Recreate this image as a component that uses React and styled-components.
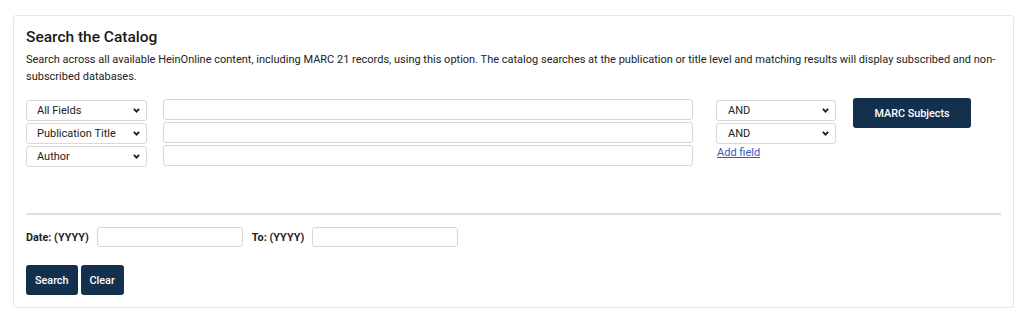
import React from "react";
import styled, { createGlobalStyle } from "styled-components";

const Global = createGlobalStyle`
  html, body { margin: 0; padding: 0; background: #fff; }
  body { font-family: Roboto, "Noto Sans", Arial, sans-serif; color: #222; }
  * { box-sizing: border-box; }
`;

const Page = styled.div`
  padding: 15px 10px 0 13px;
`;

const Card = styled.section`
  width: 1001px;
  border: 1px solid #e6e6e6;
  border-radius: 3px;
  padding: 11px 12px 12px 12px;
  background: #fff;
`;

const Title = styled.h2`
  margin: 0;
  font-size: 15.5px;
  line-height: 20px;
  font-weight: 500;
  color: #1a1a1a;
`;

const Desc = styled.p`
  margin: 4px 0 0;
  font-size: 11px;
  line-height: 17px;
  color: #222;
`;

const FieldGrid = styled.div`
  display: grid;
  grid-template-columns: 121px 530px 120px 118px;
  grid-template-rows: 21px 21px 21px;
  column-gap: 16px;
  row-gap: 2px;
  margin-top: 14px;
  align-items: stretch;
`;

const SelectWrap = styled.div`
  position: relative;
  width: 100%;
  height: 100%;
  margin-left: ${(p) => p.$shift || 0}px;
`;

const NativeSelect = styled.select`
  appearance: none;
  -webkit-appearance: none;
  width: 100%;
  height: 100%;
  border: 1px solid #d9d9d9;
  border-radius: 3px;
  background: #fff;
  font-family: Roboto, Arial, sans-serif;
  font-size: 11px;
  color: #222;
  padding: 0 20px 0 ${(p) => p.$pad || 10}px;
  outline: none;
`;

const Chevron = styled.svg`
  position: absolute;
  right: 7px;
  top: 50%;
  width: 7px;
  height: 5px;
  margin-top: -2px;
  pointer-events: none;
`;

const TextInput = styled.input`
  width: 100%;
  height: 100%;
  border: 1px solid #d6d6d6;
  border-radius: 3px;
  background: #fff;
  outline: none;
  font-family: Roboto, Arial, sans-serif;
  font-size: 12px;
`;

const AddField = styled.a`
  font-size: 11px;
  line-height: 16px;
  color: #3559c7;
  text-decoration: underline;
  margin-left: ${(p) => p.$shift || 0}px;
  align-self: start;
`;

const NavyButton = styled.button`
  background: #14304f;
  color: #fff;
  border: none;
  border-radius: 3px;
  font-family: Roboto, Arial, sans-serif;
  font-size: 10.8px;
  font-weight: 500;
  height: 30px;
  padding: 0 9px;
  cursor: pointer;
`;

const MarcButton = styled(NavyButton)`
  grid-column: 4;
  grid-row: 1 / span 2;
  width: 118px;
  align-self: start;
  margin-top: -1px;
  margin-left: 8px;
`;

const Divider = styled.hr`
  margin: 47px 0 0;
  border: none;
  border-top: 2px solid #dedede;
  height: 0;
`;

const DateRow = styled.div`
  display: flex;
  align-items: center;
  margin-top: 12px;
  height: 20px;
`;

const DateLabel = styled.label`
  font-size: 10.8px;
  font-weight: 700;
  color: #222;
  margin-right: 8px;
  margin-left: ${(p) => p.$ml || 0}px;
`;

const DateInput = styled.input`
  width: 146px;
  height: 20px;
  border: 1px solid #d6d6d6;
  border-radius: 3px;
  outline: none;
`;

const Buttons = styled.div`
  display: flex;
  gap: 3px;
  margin-top: 18px;
`;

const ChevronIcon = () => (
  <Chevron viewBox="0 0 7 5">
    <path d="M0.9 0.9 L3.5 3.6 L6.1 0.9" fill="none" stroke="#222" strokeWidth="1.9" />
  </Chevron>
);

const FieldSelect = ({ value, options, pad, shift }) => (
  <SelectWrap $shift={shift}>
    <NativeSelect defaultValue={value} $pad={pad}>
      {options.map((o) => (
        <option key={o}>{o}</option>
      ))}
    </NativeSelect>
    <ChevronIcon />
  </SelectWrap>
);

const fieldOptions = ["All Fields", "Publication Title", "Author", "Subject", "Publisher"];
const boolOptions = ["AND", "OR", "NOT"];

export default function App() {
  return (
    <Page>
      <Global />
      <Card>
        <Title>Search the Catalog</Title>
        <Desc>
          Search across all available HeinOnline content, including MARC 21 records, using this option. The catalog searches at the publication or title level and matching results will display subscribed and non-subscribed databases.
        </Desc>
        <FieldGrid>
          <FieldSelect value="All Fields" options={fieldOptions} />
          <TextInput />
          <FieldSelect value="AND" options={boolOptions} pad={11} shift={7} />
          <MarcButton>MARC Subjects</MarcButton>

          <FieldSelect value="Publication Title" options={fieldOptions} />
          <TextInput />
          <FieldSelect value="AND" options={boolOptions} pad={11} shift={7} />

          <FieldSelect value="Author" options={fieldOptions} />
          <TextInput />
          <AddField href="#" $shift={8}>Add field</AddField>
        </FieldGrid>
        <Divider />
        <DateRow>
          <DateLabel>Date: (YYYY)</DateLabel>
          <DateInput />
          <DateLabel $ml={9}>To: (YYYY)</DateLabel>
          <DateInput />
        </DateRow>
        <Buttons>
          <NavyButton>Search</NavyButton>
          <NavyButton>Clear</NavyButton>
        </Buttons>
      </Card>
    </Page>
  );
}
